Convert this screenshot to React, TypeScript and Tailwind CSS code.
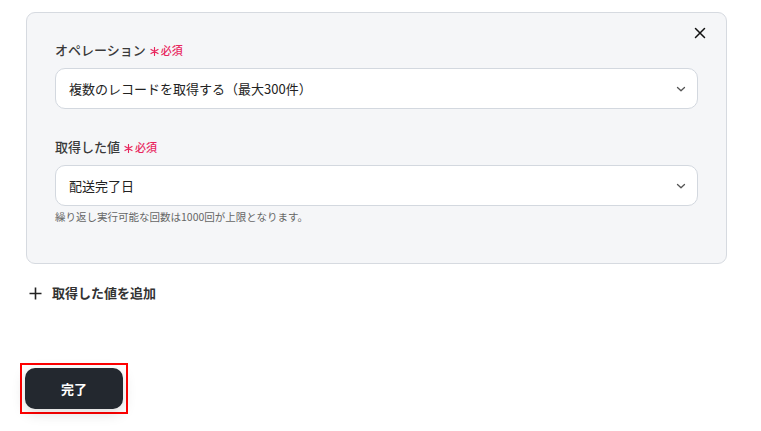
import React from "react";

const font = { fontFamily: '"Noto Sans CJK JP", "Noto Sans", sans-serif' };

function Chevron() {
  return (
    <svg width="12" height="12" viewBox="0 0 12 12" fill="none" className="text-[#555]">
      <path d="M2.5 4.5 L6 7.8 L9.5 4.5" stroke="currentColor" strokeWidth="1.3" strokeLinecap="round" strokeLinejoin="round" />
    </svg>
  );
}

function Asterisk() {
  return (
    <svg width="9" height="9" viewBox="0 0 10 10" fill="none" className="ml-[4px] mt-[2px]">
      <path d="M5 0.5 V9.5 M1.1 2.75 L8.9 7.25 M8.9 2.75 L1.1 7.25" stroke="#e8265e" strokeWidth="1.3" strokeLinecap="round" />
    </svg>
  );
}

function Field({ label, value }: { label: string; value: string }) {
  return (
    <div className="flex flex-col">
      <div className="flex items-center h-[20px] mb-[8px]">
        <span className="text-[13px] font-medium text-[#3a3a3a]">{label}</span>
        <Asterisk />
        <span className="ml-[2px] text-[11px] font-medium text-[#e8265e]">必須</span>
      </div>
      <div className="h-[41px] rounded-[10px] border border-[#d3d8df] bg-white flex items-center justify-between pl-[13px] pr-[10px]">
        <span className="text-[13px] text-[#222]">{value}</span>
        <Chevron />
      </div>
    </div>
  );
}

export default function App() {
  return (
    <div className="w-[761px] h-[431px] bg-white relative overflow-hidden" style={font}>
      <div className="pt-[12px] pl-[26px]">
        <div className="relative w-[701px] h-[252px] rounded-[9px] border border-[#d6dae0] bg-[#f5f6f8] pt-[27px] px-[28px]">
          <button className="absolute right-[19px] top-[13px] w-[14px] h-[14px] flex items-center justify-center">
            <svg width="12" height="12" viewBox="0 0 12 12" fill="none">
              <path d="M1.5 1.5 L10.5 10.5 M10.5 1.5 L1.5 10.5" stroke="#111" strokeWidth="1.5" strokeLinecap="round" />
            </svg>
          </button>
          <Field label="オペレーション" value="複数のレコードを取得する（最大300件）" />
          <div className="mt-[28px]">
            <Field label="取得した値" value="配送完了日" />
          </div>
          <div className="mt-[3px] text-[10.5px] leading-[16px] text-[#666]">
            繰り返し実行可能な回数は1000回が上限となります。
          </div>
        </div>
        <div className="mt-[19px] flex items-center h-[20px] ml-[3px]">
          <svg width="13" height="13" viewBox="0 0 13 13" fill="none">
            <path d="M6.5 0.5 V12.5 M0.5 6.5 H12.5" stroke="#222" strokeWidth="1.6" />
          </svg>
          <span className="ml-[10px] text-[13px] font-bold text-[#333]">取得した値を追加</span>
        </div>
      </div>
      <div className="ml-[20px] mt-[60px] inline-block border-2 border-[#ff0000] p-[3px]">
        <button className="w-[98px] h-[41px] rounded-[10px] bg-[#23282f] text-white text-[13px] font-bold flex items-center justify-center shadow-[0_4px_14px_rgba(0,0,0,0.15)]">
          完了
        </button>
      </div>
    </div>
  );
}
